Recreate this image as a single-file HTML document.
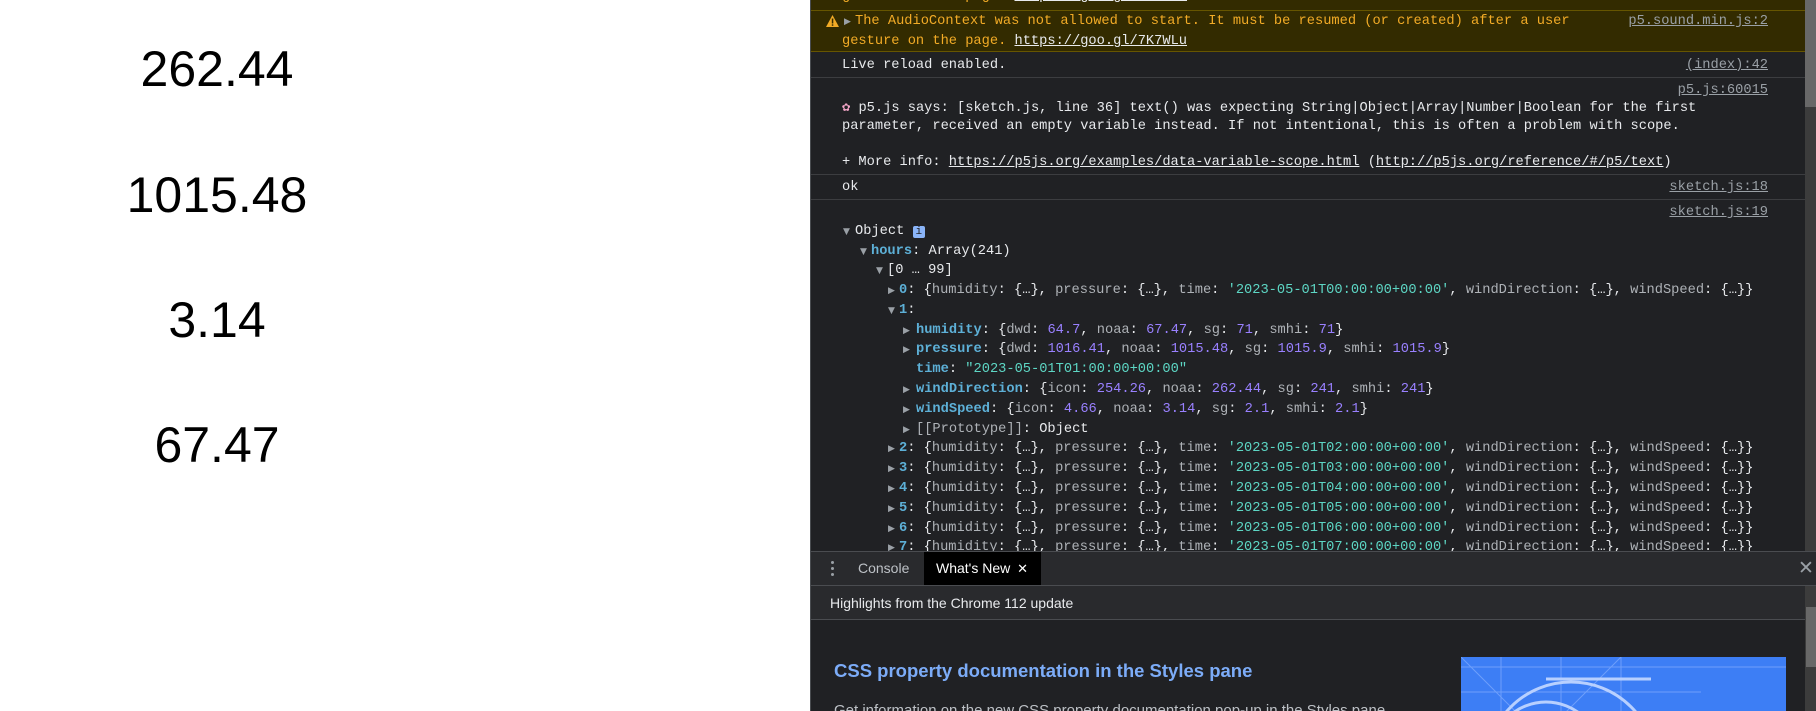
<!DOCTYPE html>
<html><head><meta charset="utf-8">
<style>
*{margin:0;padding:0;box-sizing:border-box}
html,body{width:1816px;height:711px;overflow:hidden}
body{background:#fff;position:relative;font-family:"Liberation Sans",sans-serif}
.num{position:absolute;left:0;width:434px;text-align:center;font-size:50px;color:#000;line-height:50px}
#dt{position:absolute;left:810px;top:0;width:1006px;height:711px;background:#202124;border-left:1px solid #494c50;overflow:hidden}
.l{position:absolute;font-family:"Liberation Mono",monospace;font-size:13.7px;line-height:20px;color:#e8eaed;white-space:pre}
.r{position:absolute;right:48px;font-family:"Liberation Mono",monospace;font-size:13.7px;line-height:20px;color:#9aa0a6;text-decoration:underline;white-space:pre}
.sep{position:absolute;left:0;width:994px;height:1px;background:#3c3d40}
.w{color:#f2ab26}
u{color:#e8eaed}
.k{color:#5db0d7;font-weight:bold}
.g{color:#aeb2b7}
.n{color:#9980ff}
.s{color:#5dd6c4}
.t{position:absolute;font-size:9px;color:#9aa0a6;font-family:"DejaVu Sans",sans-serif;line-height:20px}
</style></head><body>
<div class="num" style="top:44px">262.44</div>
<div class="num" style="top:170px">1015.48</div>
<div class="num" style="top:295px">3.14</div>
<div class="num" style="top:420px">67.47</div>

<div id="dt">
 <div style="position:absolute;left:0;top:0;width:994px;height:52px;background:#332b00;border-bottom:1px solid #665500"></div>
 <div style="position:absolute;left:0;top:10px;width:994px;height:1px;background:#665500"></div>
 <div class="l w" style="left:31px;top:-13px">gesture on the page. <u>https://goo.gl/7K7WLu</u></div>
 <svg style="position:absolute;left:15px;top:15px" width="13" height="12"><path d="M6.5 0L13 12H0Z" fill="#f2ab26"/><rect x="5.8" y="3.5" width="1.5" height="5" fill="#332b00"/><rect x="5.8" y="9.3" width="1.5" height="1.5" fill="#332b00"/></svg>
 <div class="t" style="left:33px;top:12px">▶</div>
 <div class="l w" style="left:44px;top:12px">The AudioContext was not allowed to start. It must be resumed (or created) after a user</div>
 <div class="l w" style="left:31px;top:32px">gesture on the page. <u>https://goo.gl/7K7WLu</u></div>
 <div class="r" style="top:12px">p5.sound.min.js:2</div>

 <div class="l" style="left:31px;top:56px">Live reload enabled.</div>
 <div class="r" style="top:56px">(index):42</div>
 <div class="sep" style="top:77px"></div>
 <div class="r" style="top:81px">p5.js:60015</div>
 <div class="l" style="left:31px;top:99px"><span style="color:#f4a6c8">✿</span> p5.js says: [sketch.js, line 36] text() was expecting String|Object|Array|Number|Boolean for the first</div>
 <div class="l" style="left:31px;top:117px">parameter, received an empty variable instead. If not intentional, this is often a problem with scope.</div>
 <div class="l" style="left:31px;top:153px">+ More info: <u>https://p5js.org/examples/data-variable-scope.html</u> (<u>http://p5js.org/reference/#/p5/text</u>)</div>
 <div class="sep" style="top:174px"></div>
 <div class="l" style="left:31px;top:178px">ok</div>
 <div class="r" style="top:178px">sketch.js:18</div>
 <div class="sep" style="top:199px"></div>
 <div class="r" style="top:203px">sketch.js:19</div>

 <div class="t" style="left:32px;top:222px">▼</div>
 <div class="l" style="left:44px;top:222px">Object <span style="background:#8ab4f8;color:#202124;border-radius:2px;font-size:11px;padding:0 3px">i</span></div>
 <div class="t" style="left:49px;top:242px">▼</div>
 <div class="l" style="left:60px;top:242px"><span class="k">hours</span>: Array(241)</div>
 <div class="t" style="left:65px;top:261px">▼</div>
 <div class="l" style="left:76px;top:261px">[0 … 99]</div>
 <div class="t" style="left:77px;top:281px">▶</div>
 <div class="l" style="left:88px;top:281px"><span class="k">0</span>: {<span class="g">humidity</span>: {…}, <span class="g">pressure</span>: {…}, <span class="g">time</span>: <span class="s">'2023-05-01T00:00:00+00:00'</span>, <span class="g">windDirection</span>: {…}, <span class="g">windSpeed</span>: {…}}</div>
 <div class="t" style="left:77px;top:301px">▼</div>
 <div class="l" style="left:88px;top:301px"><span class="k">1</span>:</div>
 <div class="t" style="left:92px;top:321px">▶</div>
 <div class="l" style="left:105px;top:321px"><span class="k">humidity</span>: {<span class="g">dwd</span>: <span class="n">64.7</span>, <span class="g">noaa</span>: <span class="n">67.47</span>, <span class="g">sg</span>: <span class="n">71</span>, <span class="g">smhi</span>: <span class="n">71</span>}</div>
 <div class="t" style="left:92px;top:340px">▶</div>
 <div class="l" style="left:105px;top:340px"><span class="k">pressure</span>: {<span class="g">dwd</span>: <span class="n">1016.41</span>, <span class="g">noaa</span>: <span class="n">1015.48</span>, <span class="g">sg</span>: <span class="n">1015.9</span>, <span class="g">smhi</span>: <span class="n">1015.9</span>}</div>
 <div class="l" style="left:105px;top:360px"><span class="k">time</span>: <span class="s">"2023-05-01T01:00:00+00:00"</span></div>
 <div class="t" style="left:92px;top:380px">▶</div>
 <div class="l" style="left:105px;top:380px"><span class="k">windDirection</span>: {<span class="g">icon</span>: <span class="n">254.26</span>, <span class="g">noaa</span>: <span class="n">262.44</span>, <span class="g">sg</span>: <span class="n">241</span>, <span class="g">smhi</span>: <span class="n">241</span>}</div>
 <div class="t" style="left:92px;top:400px">▶</div>
 <div class="l" style="left:105px;top:400px"><span class="k">windSpeed</span>: {<span class="g">icon</span>: <span class="n">4.66</span>, <span class="g">noaa</span>: <span class="n">3.14</span>, <span class="g">sg</span>: <span class="n">2.1</span>, <span class="g">smhi</span>: <span class="n">2.1</span>}</div>
 <div class="t" style="left:92px;top:420px">▶</div>
 <div class="l" style="left:105px;top:420px"><span class="g">[[Prototype]]</span>: Object</div>
 <div class="t" style="left:77px;top:439px">▶</div><div class="l" style="left:88px;top:439px"><span class="k">2</span>: {<span class="g">humidity</span>: {…}, <span class="g">pressure</span>: {…}, <span class="g">time</span>: <span class="s">'2023-05-01T02:00:00+00:00'</span>, <span class="g">windDirection</span>: {…}, <span class="g">windSpeed</span>: {…}}</div>
 <div class="t" style="left:77px;top:459px">▶</div><div class="l" style="left:88px;top:459px"><span class="k">3</span>: {<span class="g">humidity</span>: {…}, <span class="g">pressure</span>: {…}, <span class="g">time</span>: <span class="s">'2023-05-01T03:00:00+00:00'</span>, <span class="g">windDirection</span>: {…}, <span class="g">windSpeed</span>: {…}}</div>
 <div class="t" style="left:77px;top:479px">▶</div><div class="l" style="left:88px;top:479px"><span class="k">4</span>: {<span class="g">humidity</span>: {…}, <span class="g">pressure</span>: {…}, <span class="g">time</span>: <span class="s">'2023-05-01T04:00:00+00:00'</span>, <span class="g">windDirection</span>: {…}, <span class="g">windSpeed</span>: {…}}</div>
 <div class="t" style="left:77px;top:499px">▶</div><div class="l" style="left:88px;top:499px"><span class="k">5</span>: {<span class="g">humidity</span>: {…}, <span class="g">pressure</span>: {…}, <span class="g">time</span>: <span class="s">'2023-05-01T05:00:00+00:00'</span>, <span class="g">windDirection</span>: {…}, <span class="g">windSpeed</span>: {…}}</div>
 <div class="t" style="left:77px;top:519px">▶</div><div class="l" style="left:88px;top:519px"><span class="k">6</span>: {<span class="g">humidity</span>: {…}, <span class="g">pressure</span>: {…}, <span class="g">time</span>: <span class="s">'2023-05-01T06:00:00+00:00'</span>, <span class="g">windDirection</span>: {…}, <span class="g">windSpeed</span>: {…}}</div>
 <div class="t" style="left:77px;top:538px">▶</div><div class="l" style="left:88px;top:538px"><span class="k">7</span>: {<span class="g">humidity</span>: {…}, <span class="g">pressure</span>: {…}, <span class="g">time</span>: <span class="s">'2023-05-01T07:00:00+00:00'</span>, <span class="g">windDirection</span>: {…}, <span class="g">windSpeed</span>: {…}}</div>

 <div style="position:absolute;left:994px;top:0;width:12px;height:551px;background:#3c3c3c"></div>
 <div style="position:absolute;left:994px;top:0;width:12px;height:107px;background:#686868"></div>

 <div style="position:absolute;left:0;top:551px;width:1006px;height:35px;background:#292a2d;border-top:1px solid #4a4c50;border-bottom:1px solid #4a4c50"></div>
 <div style="position:absolute;left:20px;top:561px;width:3px;height:3px;background:#9aa0a6;border-radius:2px;box-shadow:0 6px 0 #9aa0a6,0 12px 0 #9aa0a6"></div>
 <div style="position:absolute;left:47px;top:552px;line-height:33px;font-size:14px;color:#bdc1c6">Console</div>
 <div style="position:absolute;left:113px;top:552px;width:117px;height:33px;background:#000;line-height:33px;font-size:14px;color:#fff;padding-left:12px">What's New <span style="font-size:13px;margin-left:3px">✕</span></div>
 <div style="position:absolute;left:987px;top:552px;line-height:33px;font-size:19px;color:#9aa0a6">✕</div>
 <div style="position:absolute;left:0;top:586px;width:994px;height:34px;background:#292a2d;border-bottom:1px solid #4a4c50"></div>
 <div style="position:absolute;left:19px;top:586px;line-height:34px;font-size:14px;color:#e8eaed">Highlights from the Chrome 112 update</div>
 <div style="position:absolute;left:23px;top:660px;font-size:18.5px;font-weight:bold;color:#7cacf8">CSS property documentation in the Styles pane</div>
 <div style="position:absolute;left:23px;top:702px;font-size:15px;color:#bdc1c6;white-space:nowrap">Get information on the new CSS property documentation pop-up in the Styles pane.</div>
 <div style="position:absolute;left:650px;top:657px;width:325px;height:60px;background:#3d7ef5;overflow:hidden">
  <svg width="325" height="60"><g stroke="#8fb6ff" stroke-width="1" fill="none" opacity=".6"><line x1="40" y1="0" x2="40" y2="60"/><line x1="100" y1="0" x2="100" y2="60"/><line x1="160" y1="0" x2="160" y2="60"/><line x1="0" y1="35" x2="240" y2="35"/><line x1="0" y1="10" x2="325" y2="10"/><line x1="0" y1="0" x2="60" y2="60"/><line x1="160" y1="0" x2="100" y2="60"/></g><g stroke="#b8d0ff" stroke-width="3" fill="none"><circle cx="110" cy="110" r="85"/><circle cx="85" cy="100" r="55"/><circle cx="85" cy="100" r="35"/><line x1="85" y1="22" x2="190" y2="22"/></g></svg>
 </div>
 <div style="position:absolute;left:994px;top:586px;width:12px;height:125px;background:#3c3c3c"></div>
 <div style="position:absolute;left:995px;top:607px;width:10px;height:60px;background:#686868"></div>
</div>
</body></html>
